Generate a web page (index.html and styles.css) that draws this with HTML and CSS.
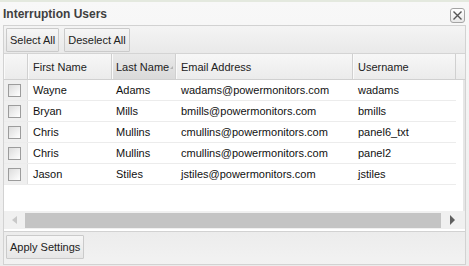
FILE: index.html
```html
<!DOCTYPE html>
<html lang="en">
<head>
    <meta charset="UTF-8">
    <title>Interruption Users</title>
    <link rel="stylesheet" href="styles.css">
</head>
<body>
    <div class="window">
        <div class="titlebar">
            <span class="title">Interruption Users</span>
            <span class="close">
                <svg width="13" height="13" viewBox="0 0 13 13"><path d="M2.5 2.5 L10.5 10.5 M10.5 2.5 L2.5 10.5" stroke="#555" stroke-width="1.4" fill="none"/></svg>
            </span>
        </div>

        <div class="panel">
            <div class="toolbar">
                <button class="btn">Select All</button>
                <button class="btn">Deselect All</button>
            </div>

            <div class="grid">
                <div class="grid-head">
                    <div class="row cols">
                        <div class="hcell"></div>
                        <div class="hcell">First Name</div>
                        <div class="hcell sorted">Last Name<span class="sort-arrow"></span></div>
                        <div class="hcell">Email Address</div>
                        <div class="hcell">Username</div>
                    </div>
                    <div class="hfill"></div>
                </div>

                <div class="grid-body">
                    <div class="rows">
                        <div class="row cols">
                            <div class="cell check"><span class="box"></span></div>
                            <div class="cell">Wayne</div>
                            <div class="cell">Adams</div>
                            <div class="cell">wadams@powermonitors.com</div>
                            <div class="cell">wadams</div>
                        </div>
                        <div class="row cols">
                            <div class="cell check"><span class="box"></span></div>
                            <div class="cell">Bryan</div>
                            <div class="cell">Mills</div>
                            <div class="cell">bmills@powermonitors.com</div>
                            <div class="cell">bmills</div>
                        </div>
                        <div class="row cols">
                            <div class="cell check"><span class="box"></span></div>
                            <div class="cell">Chris</div>
                            <div class="cell">Mullins</div>
                            <div class="cell">cmullins@powermonitors.com</div>
                            <div class="cell">panel6_txt</div>
                        </div>
                        <div class="row cols">
                            <div class="cell check"><span class="box"></span></div>
                            <div class="cell">Chris</div>
                            <div class="cell">Mullins</div>
                            <div class="cell">cmullins@powermonitors.com</div>
                            <div class="cell">panel2</div>
                        </div>
                        <div class="row cols">
                            <div class="cell check"><span class="box"></span></div>
                            <div class="cell">Jason</div>
                            <div class="cell">Stiles</div>
                            <div class="cell">jstiles@powermonitors.com</div>
                            <div class="cell">jstiles</div>
                        </div>
                    </div>
                    <div class="vstrip"></div>
                </div>

                <div class="hscroll">
                    <span class="arrow left"></span>
                    <span class="thumb"></span>
                    <span class="arrow right"></span>
                </div>
            </div>
        </div>

        <div class="footer">
            <button class="btn">Apply Settings</button>
        </div>
    </div>
</body>
</html>
```

FILE: styles.css
```css
body {
    margin: 0;
    font-family: "Liberation Sans", Arial, sans-serif;
    font-size: 11px;
    color: #111;
    background: #f0f0f0;
}
.window {
    width: 469px;
    height: 266px;
    display: flex;
    flex-direction: column;
    background: linear-gradient(#f8f8f8, #ececec);
    border-top: 2px solid #e4e9df;
    box-sizing: border-box;
}
.titlebar {
    height: 23px;
    display: flex;
    align-items: center;
    justify-content: space-between;
    padding: 0 4px 0 3px;
}
.title {
    font-size: 12px;
    font-weight: bold;
    color: #3f3f3f;
}
.close {
    width: 15px;
    height: 15px;
    box-sizing: border-box;
    border: 1px solid #a4a4a4;
    border-radius: 3px;
    background: linear-gradient(#ffffff, #e8e8e8);
    display: flex;
    align-items: center;
    justify-content: center;
    margin-top: 4px;
}
.panel {
    margin: 0 3px;
    border: 1px solid #d2d2d2;
    display: flex;
    flex-direction: column;
}
.toolbar {
    height: 28px;
    box-sizing: border-box;
    border-bottom: 1px solid #d4d4d4;
    background: linear-gradient(#f4f4f4, #e9e9e9);
    display: flex;
    align-items: flex-start;
    gap: 5px;
    padding: 2px 2px 0;
}
.btn {
    height: 24px;
    padding: 0 3px;
    border: 1px solid #cacaca;
    border-radius: 1px;
    background: linear-gradient(#f6f6f6, #e6e6e6);
    font-family: "Liberation Sans", Arial, sans-serif;
    font-size: 11px;
    color: #222;
}
.grid {
    display: flex;
    flex-direction: column;
    background: #fff;
}
.grid-head {
    display: flex;
    height: 25px;
    border-bottom: 1px solid #d0d0d0;
    background: linear-gradient(#f7f7f7, #ebebeb);
}
.cols {
    display: grid;
    grid-template-columns: 24px 84px 64px 177px 103px;
}
.hcell {
    border-right: 1px solid #d0d0d0;
    box-shadow: inset 1px 0 #fafafa;
    padding: 0 5px;
    display: flex;
    align-items: center;
    color: #222;
    position: relative;
}
.hcell.sorted {
    background: linear-gradient(#e9e9e9, #dadada);
    padding-left: 4px;
}
.sort-arrow {
    position: absolute;
    right: 2px;
    top: 12px;
    width: 0;
    height: 0;
    border-left: 3px solid transparent;
    border-bottom: 3px solid #b4b4b4;
}
.hfill {
    flex: 1;
}
.grid-body {
    display: flex;
    height: 131px;
}
.rows {
    flex: 1;
}
.vstrip {
    width: 2px;
    background: #e6e6e6;
}
.row.cols {
    height: 21px;
}
.rows .row {
    border-bottom: 1px solid #ececec;
    box-sizing: border-box;
    width: 452px;
}
.grid-head .row {
    height: 25px;
}
.cell {
    padding: 0 5px;
    display: flex;
    align-items: center;
    white-space: nowrap;
}
.cell:nth-child(3) {
    padding-left: 4px;
}
.cell.check {
    background: #efefef;
    border-right: 1px solid #e0e0e0;
    padding: 0 0 0 4px;
}
.box {
    width: 13px;
    height: 13px;
    box-sizing: border-box;
    border: 1px solid #9c9c9c;
    background: linear-gradient(135deg, #dcdcdc, #ffffff);
}
.hscroll {
    height: 18px;
    margin-bottom: 2px;
    background: #f0f0f0;
    display: flex;
    align-items: center;
}
.arrow {
    width: 0;
    height: 0;
    border-top: 4px solid transparent;
    border-bottom: 4px solid transparent;
}
.arrow.left {
    border-right: 5px solid #c8c8c8;
    margin: 0 8px 0 8px;
}
.thumb {
    width: 416px;
    height: 15px;
    background: #c4c4c4;
}
.arrow.right {
    border-top-width: 5px;
    border-bottom-width: 5px;
    border-left: 5px solid #5f5f5f;
    margin-left: 9px;
}
.footer {
    margin: 0 3px;
    height: 29px;
    border: 1px solid #d2d2d2;
    border-top: none;
    background: linear-gradient(#ececec, #f2f2f2);
    padding: 3px 2px 0;
}
```
